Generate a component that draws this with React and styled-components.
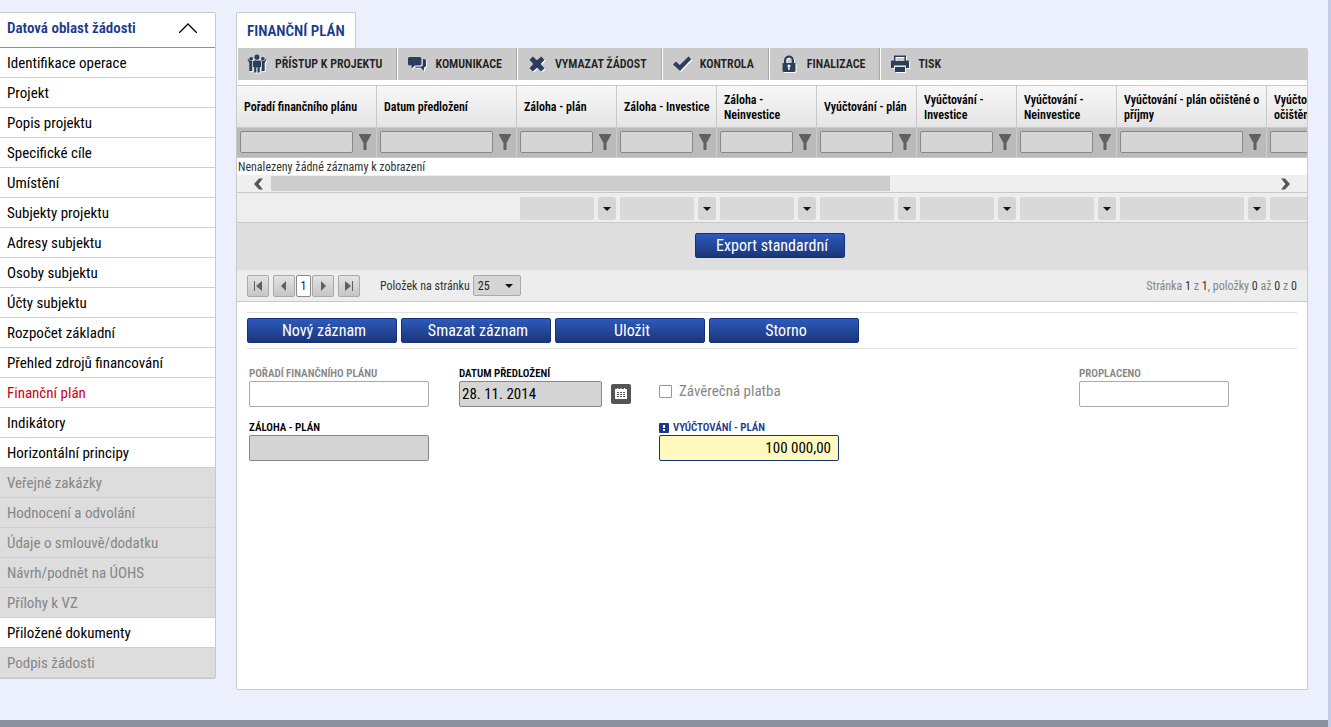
import styled, { createGlobalStyle, css } from "styled-components";

const GlobalStyle = createGlobalStyle`
  * {
    box-sizing: border-box;
  }

  body {
    margin: 0;
    background: #ecf0fd;
  }

  body,
  button,
  input,
  select {
    font-family: "Roboto Condensed", "Liberation Sans Narrow", Roboto, sans-serif;
  }
`;

const Page = styled.div`
  display: flex;
  flex-direction: column;
  min-height: 100vh;
  border-right: 3px solid #c3cce6;
  background: #ecf0fd;
`;

const Content = styled.div`
  display: flex;
  flex: 1;
  align-items: stretch;
  gap: 20px;
  padding: 12px 20px 30px 0;
`;

const BottomBar = styled.footer`
  height: 7px;
  background: #8b909e;
`;

// Levé menu
const Sidebar = styled.nav`
  flex: none;
  align-self: flex-start;
  width: 216px;
  border: 1px solid #c9c9cb;
  border-left: 0;
  border-radius: 0 2px 2px 0;
  background: #ffffff;
`;

const SidebarHeader = styled.button`
  display: flex;
  justify-content: space-between;
  align-items: center;
  width: 100%;
  height: 35px;
  padding: 0 18px 4px 7px;
  border: 0;
  border-bottom: 1px solid #8f8f8f;
  background: none;
  color: #1b3a8c;
  font-size: 15px;
  font-weight: 600;
  cursor: pointer;
`;

const MenuList = styled.ul`
  margin: 0;
  padding: 0;
  list-style: none;
`;

const MenuLink = styled.a`
  display: block;
  height: 30px;
  padding: 0 7px;
  border-bottom: 1px solid #cfcfcf;
  background: ${({ $disabled }) => ($disabled ? "#dddddd" : "#ffffff")};
  color: ${({ $disabled, $active }) =>
    $active ? "#cc0019" : $disabled ? "#868686" : "#000000"};
  font-size: 15px;
  line-height: 31px;
  text-decoration: none;
`;

const Main = styled.main`
  display: flex;
  flex: 1;
  flex-direction: column;
  align-items: flex-start;
  min-width: 0;
`;

const Tab = styled.h1`
  height: 36px;
  margin: 0;
  padding: 0 10px;
  border: 1px solid #c9c9cb;
  border-bottom: 0;
  border-radius: 2px 2px 0 0;
  background: #ffffff;
  color: #1b3a8c;
  font-size: 15px;
  font-weight: 600;
  line-height: 36px;
`;

const Panel = styled.section`
  flex: 1;
  align-self: stretch;
  border: 1px solid #c9c9cb;
  border-top: 0;
  border-radius: 0 2px 2px 2px;
  background: #ffffff;
`;

const Toolbar = styled.div`
  display: flex;
  height: 32px;
  margin-bottom: 5px;
  background: #cacaca;
`;

const ToolButton = styled.button`
  display: flex;
  align-items: center;
  gap: 8px;
  padding: 0 14px 0 9px;
  border: 0;
  border-left: 1px solid #ffffff;
  border-right: 1px solid #aaaaaa;
  background: none;
  color: #222222;
  font-size: 12px;
  font-weight: 600;
  cursor: pointer;

  &:last-child {
    border-right: 0;
  }
`;

const ToolIcon = styled.svg`
  width: 20px;
  height: 20px;
  fill: #2c3e5e;
  filter: drop-shadow(1px 1px 0 #ffffff);
`;

// Tabulka záznamů
const Clip = styled.div`
  overflow: hidden;
`;

const Grid = styled.table`
  width: 1190px;
  border-collapse: separate;
  border-spacing: 0;
  table-layout: fixed;
`;

const HeadCell = styled.th`
  height: 43px;
  padding: 2px 4px 0 7px;
  border: solid #c9c9c9;
  border-width: 1px 1px 1px 0;
  background: linear-gradient(#f8f8f8, #e4e4e4);
  color: #000000;
  font-size: 12px;
  font-weight: 600;
  line-height: 15px;
  text-align: left;
`;

const FilterCell = styled.td`
  height: 30px;
  padding: 0 5px 2px 3px;
  border-right: 1px solid #cccccc;
  border-bottom: 1px solid #c9c9c9;
  background: #bababa;
`;

const EmptyCell = styled.td`
  height: 17px;
  padding: 2px 1px 0;
  color: #333333;
  font-size: 12px;
  line-height: 15px;
`;

const FilterBox = styled.div`
  display: flex;
  align-items: center;
  gap: 6px;
`;

const FilterInput = styled.input`
  flex: 1;
  min-width: 0;
  height: 22px;
  padding: 0 4px;
  border: 1px solid #888888;
  border-radius: 2px;
  background: #d5d5d5;
`;

const IconButton = styled.button`
  display: flex;
  align-items: center;
  justify-content: center;
  padding: 0;
  border: 0;
  background: none;
  cursor: pointer;
`;

const ScrollRow = styled.div`
  display: flex;
  align-items: center;
  height: 18px;
  padding: 0 16px 0 16px;
  border-bottom: 1px solid #c9c9c9;
  background: #efefef;
`;

const ScrollTrack = styled.div`
  flex: 1;
  height: 15px;
  margin: 0 12px 0 8px;
`;

const ScrollThumb = styled.div`
  width: 62%;
  height: 15px;
  background: #cccccc;
`;

const SummaryCell = styled.td`
  height: 30px;
  padding: 2px 1px 0 3px;
  border-bottom: 1px solid #c9c9c9;
  background: #eeeeee;
`;

const SummaryBox = styled.div`
  display: flex;
  gap: 4px;
`;

const SummaryInput = styled.input`
  flex: 1;
  min-width: 0;
  height: 23px;
  border: 0;
  border-radius: 2px;
  background: #d9d9d9;
`;

const SummaryButton = styled(IconButton)`
  width: 18px;
  height: 23px;
  border-radius: 3px;
  background: #d5d5d5;
`;

const ExportRow = styled.div`
  display: flex;
  justify-content: center;
  padding: 10px 14px 12px 10px;
  background: #dedede;
`;

const PrimaryButton = styled.button`
  width: 150px;
  height: 25px;
  padding: 0 0 0 4px;
  border: 1px solid #15317e;
  border-radius: 2px;
  background: linear-gradient(#2d5abc, #1a3679);
  color: #ffffff;
  font-size: 16px;
  cursor: pointer;
`;

// Stránkování
const Pager = styled.div`
  display: flex;
  align-items: center;
  height: 32px;
  padding: 0 10px;
  border-bottom: 1px solid #c9c9c9;
  background: #ededed;
  color: #333333;
  font-size: 12px;
`;

const PageNav = styled.div`
  display: flex;
  align-items: center;
  gap: 4px;
`;

const PageGroup = styled.div`
  display: flex;
  gap: 1px;
`;

const pageBox = css`
  height: 22px;
  border: 1px solid #a9a9a9;
  border-radius: 2px;
`;

const PageButton = styled(IconButton)`
  ${pageBox}
  width: 22px;
  background: linear-gradient(#e3e3e3, #c6c6c6);
`;

const CurrentPage = styled.span`
  ${pageBox}
  width: 15px;
  border-color: #888888;
  background: #ffffff;
  color: #222222;
  line-height: 20px;
  text-align: center;
`;

const PageSizeLabel = styled.label`
  margin: 0 3px 0 20px;
`;

const SelectWrapper = styled.div`
  position: relative;

  svg {
    position: absolute;
    top: 9px;
    right: 8px;
    pointer-events: none;
  }
`;

const PageSize = styled.select`
  display: block;
  width: 48px;
  height: 21px;
  padding: 0 4px;
  border: 1px solid #a9a9a9;
  border-radius: 2px;
  appearance: none;
  background: #d5d5d5;
  color: #222222;
  font-size: 12px;
`;

const PageInfo = styled.div`
  margin-left: auto;
  color: #868686;

  strong {
    color: #333333;
    font-weight: 400;
  }
`;

// Formulář
const Actions = styled.div`
  display: flex;
  gap: 4px;
  margin: 10px 10px 0;
  padding: 5px 0;
  border: solid #e2e2e2;
  border-width: 1px 0;
`;

const Form = styled.form`
  display: grid;
  grid-template-columns: 210px 200px 420px 1fr;
  row-gap: 14px;
  padding: 18px 12px;
`;

const Field = styled.div`
  display: flex;
  flex-direction: column;
  align-items: flex-start;
  grid-column: ${({ $column }) => $column};
`;

const FieldLabel = styled.label`
  display: flex;
  align-items: center;
  gap: 4px;
  height: 14px;
  color: ${({ $color }) => $color || "#000000"};
  font-size: 11px;
  font-weight: 600;
  line-height: 14px;
  text-transform: uppercase;
`;

const TextInput = styled.input`
  width: ${({ $width }) => $width || "180px"};
  height: 26px;
  padding: 0 7px 0 2px;
  border: 1px solid ${({ $border }) => $border || "#a9a9a9"};
  border-radius: 2px;
  background: ${({ $fill }) => $fill || "#ffffff"};
  color: #000000;
  font-size: 15px;
  text-align: ${({ $align }) => $align || "left"};
`;

const DateBox = styled.div`
  display: flex;
  align-items: center;
  gap: 9px;
`;

const CalendarButton = styled(IconButton)`
  width: 20px;
  height: 20px;
  border-radius: 2px;
  background: #555555;
`;

const CheckField = styled.label`
  display: flex;
  align-items: center;
  gap: 7px;
  height: 40px;
  padding-top: 8px;
  color: #868686;
  font-size: 15px;
`;

const Checkbox = styled.input`
  width: 13px;
  height: 13px;
  margin: 0;
  border: 1px solid #8c9a9a;
  border-radius: 1px;
  appearance: none;
  background: #ffffff;
`;

const menu = [
  { label: "Identifikace operace" },
  { label: "Projekt" },
  { label: "Popis projektu" },
  { label: "Specifické cíle" },
  { label: "Umístění" },
  { label: "Subjekty projektu" },
  { label: "Adresy subjektu" },
  { label: "Osoby subjektu" },
  { label: "Účty subjektu" },
  { label: "Rozpočet základní" },
  { label: "Přehled zdrojů financování" },
  { label: "Finanční plán", active: true },
  { label: "Indikátory" },
  { label: "Horizontální principy" },
  { label: "Veřejné zakázky", disabled: true },
  { label: "Hodnocení a odvolání", disabled: true },
  { label: "Údaje o smlouvě/dodatku", disabled: true },
  { label: "Návrh/podnět na ÚOHS", disabled: true },
  { label: "Přílohy k VZ", disabled: true },
  { label: "Přiložené dokumenty" },
  { label: "Podpis žádosti", disabled: true },
];

const columns = [
  { label: "Pořadí finančního plánu", width: 140 },
  { label: "Datum předložení", width: 140 },
  { label: "Záloha - plán", width: 100, summary: true },
  { label: "Záloha - Investice", width: 100, summary: true },
  { label: "Záloha - Neinvestice", width: 100, summary: true },
  { label: "Vyúčtování - plán", width: 100, summary: true },
  { label: "Vyúčtování - Investice", width: 100, summary: true },
  { label: "Vyúčtování - Neinvestice", width: 100, summary: true },
  { label: "Vyúčtování - plán očištěné o příjmy", width: 150, summary: true },
  { label: "Vyúčtování - Investice očištěné o příjmy", width: 160, summary: true },
];

const tools = [
  {
    label: "Přístup k projektu",
    icon: (
      <>
        <circle cx="10" cy="3.2" r="2.6" />
        <circle cx="4.2" cy="4.8" r="1.9" />
        <circle cx="15.8" cy="4.8" r="1.9" />
        <path d="M7 6.500h6l1 1v5.500h-1.200V18.500h-2.200v-5h-1.200v5H7.200v-5.500H6V7.500z" />
        <path d="M1 4.500l2 2.600h2.300V17H2.300V9L.6 5.500zM19 4.500l-2 2.600h-2.300V17h3V9l1.700-3.500z" />
      </>
    ),
  },
  {
    label: "Komunikace",
    icon: (
      <>
        <path d="M2.500 3h10.500q1.500 0 1.500 1.500v5.500q0 1.500-1.500 1.500H8L4.500 14.500v-3h-2Q1 11.500 1 10V4.500q0-1.500 1.500-1.500z" />
        <path d="M15.800 5h1.200q2 0 2 2v4.500q0 2-2 2v3.300l-3.500-3H9.500q-1.300 0-1.500-1.100h5.300q2.500 0 2.500-2.500z" />
      </>
    ),
  },
  {
    label: "Vymazat žádost",
    icon: (
      <path d="M2.500 5.800l3.300-3.300L10 6.200l4.200-3.700 3.300 3.300L13.800 10l3.700 4.200-3.300 3.300L10 13.800l-4.200 3.700-3.300-3.300L6.200 10z" />
    ),
  },
  {
    label: "Kontrola",
    icon: <path d="M1 10.500l3-3 3.800 3.600L16.500 2.500 19.300 5.300 8 17z" />,
  },
  {
    label: "Finalizace",
    icon: (
      <path
        fillRule="evenodd"
        d="M5 9V6.500a5 5 0 0 1 10 0V9h1.500v7.500q0 1.500-1.500 1.500H5q-1.500 0-1.500-1.500V9zm2.300 0h5.400V6.500a2.700 2.700 0 0 0-5.400 0zm1.100 3.200q0 1 .8 1.400V16h1.600v-2.400q.8-.4.800-1.400a1.600 1.600 0 0 0-3.200 0z"
      />
    ),
  },
  {
    label: "Tisk",
    icon: (
      <path
        fillRule="evenodd"
        d="M4 1.500h12v5h2q1 0 1 1V14h-3v-2.500H4V14H1V7.500q0-1 1-1h2zm1.500 1.500v4h9V3zM5 13h10v5H5z"
      />
    ),
  },
];

const Caret = () => (
  <svg width="8" height="4" viewBox="0 0 8 4" aria-hidden="true">
    <path d="M0 0h8L4 4z" fill="#111111" />
  </svg>
);

const Funnel = () => (
  <svg width="12" height="16" viewBox="0 0 12 16" aria-hidden="true">
    <path d="M0 0h12v1L7.500 9v7h-3V9L0 1z" fill="#606060" />
  </svg>
);

const PageIcon = ({ d }) => (
  <svg width="10" height="10" viewBox="0 0 10 10" aria-hidden="true">
    <path d={d} fill="#606060" />
  </svg>
);

const ColumnWidths = () => (
  <colgroup>
    {columns.map((column) => (
      <col key={column.label} width={column.width} />
    ))}
  </colgroup>
);

const DataGrid = () => (
  <>
    <Clip>
      <Grid>
        <ColumnWidths />
        <thead>
          <tr>
            {columns.map((column) => (
              <HeadCell key={column.label} scope="col">
                {column.label}
              </HeadCell>
            ))}
          </tr>
        </thead>
        <tbody>
          <tr>
            {columns.map((column) => (
              <FilterCell key={column.label}>
                <FilterBox>
                  <FilterInput aria-label={`Filtr: ${column.label}`} />
                  <IconButton aria-label={`Filtrovat: ${column.label}`}>
                    <Funnel />
                  </IconButton>
                </FilterBox>
              </FilterCell>
            ))}
          </tr>
          <tr>
            <EmptyCell colSpan={columns.length}>
              Nenalezeny žádné záznamy k zobrazení
            </EmptyCell>
          </tr>
        </tbody>
      </Grid>
    </Clip>
    <ScrollRow>
      <IconButton aria-label="Posunout doleva">
        <svg width="10" height="12" viewBox="0 0 10 12" aria-hidden="true">
          <path d="M10 .5H6L1 6l5 5.500h4L5.500 6z" fill="#555555" />
        </svg>
      </IconButton>
      <ScrollTrack>
        <ScrollThumb />
      </ScrollTrack>
      <IconButton aria-label="Posunout doprava">
        <svg width="10" height="12" viewBox="0 0 10 12" aria-hidden="true">
          <path d="M0 .5h4L9 6l-5 5.500H0L4.500 6z" fill="#555555" />
        </svg>
      </IconButton>
    </ScrollRow>
    <Clip>
      <Grid>
        <ColumnWidths />
        <tbody>
          <tr>
            {columns.map((column) => (
              <SummaryCell key={column.label}>
                {column.summary ? (
                  <SummaryBox>
                    <SummaryInput aria-label={`Souhrn: ${column.label}`} />
                    <SummaryButton aria-label={`Typ souhrnu: ${column.label}`}>
                      <Caret />
                    </SummaryButton>
                  </SummaryBox>
                ) : null}
              </SummaryCell>
            ))}
          </tr>
        </tbody>
      </Grid>
    </Clip>
  </>
);

const Paging = () => (
  <Pager>
    <PageNav>
      <PageButton aria-label="První stránka">
        <PageIcon d="M1 0h1v10H1zM9 0v10L3 5z" />
      </PageButton>
      <PageGroup>
        <PageButton aria-label="Předchozí stránka">
          <PageIcon d="M7 0v10L2 5z" />
        </PageButton>
        <CurrentPage>1</CurrentPage>
        <PageButton aria-label="Další stránka">
          <PageIcon d="M3 0v10l5-5z" />
        </PageButton>
      </PageGroup>
      <PageButton aria-label="Poslední stránka">
        <PageIcon d="M8 0h1v10H8zM1 0v10l6-5z" />
      </PageButton>
    </PageNav>
    <PageSizeLabel htmlFor="pageSize">Položek na stránku</PageSizeLabel>
    <SelectWrapper>
      <PageSize id="pageSize" defaultValue="25">
        <option>10</option>
        <option>25</option>
        <option>50</option>
      </PageSize>
      <Caret />
    </SelectWrapper>
    <PageInfo>
      Stránka <strong>1</strong> z <strong>1</strong>, položky <strong>0</strong>{" "}
      až <strong>0</strong> z <strong>0</strong>
    </PageInfo>
  </Pager>
);

const PlanForm = () => (
  <Form>
    <Field $column={1}>
      <FieldLabel htmlFor="order" $color="#868686">
        Pořadí finančního plánu
      </FieldLabel>
      <TextInput id="order" />
    </Field>
    <Field $column={2}>
      <FieldLabel htmlFor="date">Datum předložení</FieldLabel>
      <DateBox>
        <TextInput
          id="date"
          defaultValue="28. 11. 2014"
          $width="143px"
          $fill="#d5d5d5"
          $border="#868686"
        />
        <CalendarButton type="button" aria-label="Vybrat datum">
          <svg width="12" height="12" viewBox="0 0 12 12" aria-hidden="true">
            <path
              d="M0 1h2V0h1v1h2.500V0h1v1H9V0h1v1h2v10H0zM2 4v1h2V4zm3 0v1h2V4zm3 0v1h2V4zM2 6v1h2V6zm3 0v1h2V6zm3 0v1h2V6zM2 8v1h2V8zm3 0v1h2V8zm3 0v1h2V8z"
              fill="#ffffff"
              fillRule="evenodd"
            />
          </svg>
        </CalendarButton>
      </DateBox>
    </Field>
    <Field $column={3}>
      <CheckField>
        <Checkbox type="checkbox" />
        Závěrečná platba
      </CheckField>
    </Field>
    <Field $column={4}>
      <FieldLabel htmlFor="paid" $color="#868686">
        Proplaceno
      </FieldLabel>
      <TextInput id="paid" $width="150px" />
    </Field>
    <Field $column={1}>
      <FieldLabel htmlFor="advance">Záloha - plán</FieldLabel>
      <TextInput id="advance" $fill="#d5d5d5" $border="#868686" />
    </Field>
    <Field $column={3}>
      <FieldLabel htmlFor="billing" $color="#1b3a8c">
        <svg width="10" height="10" viewBox="0 0 10 10" aria-hidden="true">
          <rect width="10" height="10" rx="1" fill="#1b3a8c" />
          <path d="M4 2h2v3H4zM4 6h2v2H4z" fill="#ffffff" />
        </svg>
        Vyúčtování - plán
      </FieldLabel>
      <TextInput
        id="billing"
        defaultValue="100 000,00"
        $fill="#fff9c0"
        $border="#15317e"
        $align="right"
      />
    </Field>
  </Form>
);

const App = () => {
  return (
    <>
      <GlobalStyle />
      <Page>
        <Content>
          <Sidebar>
            <SidebarHeader>
              Datová oblast žádosti
              <svg width="18" height="10" viewBox="0 0 18 10" aria-hidden="true">
                <path
                  d="M0 10l9-9 9 9"
                  fill="none"
                  stroke="#000000"
                  strokeWidth="1.3"
                />
              </svg>
            </SidebarHeader>
            <MenuList>
              {menu.map((item) => (
                <li key={item.label}>
                  <MenuLink
                    href="#"
                    $active={item.active}
                    $disabled={item.disabled}
                  >
                    {item.label}
                  </MenuLink>
                </li>
              ))}
            </MenuList>
          </Sidebar>
          <Main>
            <Tab>FINANČNÍ PLÁN</Tab>
            <Panel>
              <Toolbar>
                {tools.map((tool) => (
                  <ToolButton key={tool.label}>
                    <ToolIcon viewBox="0 0 20 20" aria-hidden="true">
                      {tool.icon}
                    </ToolIcon>
                    {tool.label.toUpperCase()}
                  </ToolButton>
                ))}
              </Toolbar>
              <DataGrid />
              <ExportRow>
                <PrimaryButton>Export standardní</PrimaryButton>
              </ExportRow>
              <Paging />
              <Actions>
                <PrimaryButton>Nový záznam</PrimaryButton>
                <PrimaryButton>Smazat záznam</PrimaryButton>
                <PrimaryButton>Uložit</PrimaryButton>
                <PrimaryButton>Storno</PrimaryButton>
              </Actions>
              <PlanForm />
            </Panel>
          </Main>
        </Content>
        <BottomBar />
      </Page>
    </>
  );
};

export default App;
